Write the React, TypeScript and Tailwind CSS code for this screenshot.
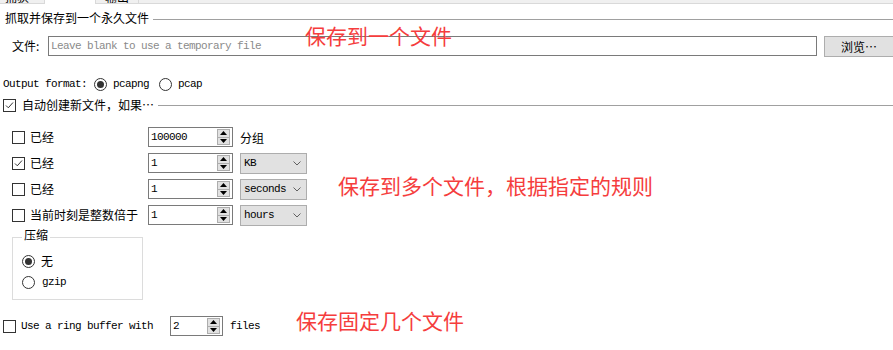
import React from 'react';

const mono = "font-['Liberation_Mono',monospace] text-[11px] tracking-[-0.6px] leading-none";
const cjk = "font-['Noto_Sans_CJK_SC',sans-serif] text-[12px] leading-none";
const note = "absolute font-['Noto_Sans_CJK_SC',sans-serif] text-[21px] leading-none text-[#f53d3d]";

function CheckBox({ checked = false }: { checked?: boolean }) {
  return (
    <div className="flex h-[13px] w-[13px] shrink-0 items-center justify-center border border-[#333333] bg-white">
      {checked && (
        <svg width="11" height="11" viewBox="0 0 11 11">
          <path d="M2 5.5L4.3 7.8L9 2.5" stroke="#333333" strokeWidth="1" fill="none" />
        </svg>
      )}
    </div>
  );
}

function Radio({ checked = false }: { checked?: boolean }) {
  return (
    <div className="flex h-[13px] w-[13px] shrink-0 items-center justify-center rounded-full border border-[#333333] bg-white">
      {checked && <div className="h-[7px] w-[7px] rounded-full bg-[#333333]" />}
    </div>
  );
}

function SpinBox({ value, w }: { value: string; w: string }) {
  return (
    <div className={`flex h-[20px] shrink-0 items-center border border-[#7a7a7a] bg-white ${w}`}>
      <span className={`flex-1 pl-[2px] text-black ${mono}`}>{value}</span>
      <div className="mr-[2px] flex h-[16px] w-[13px] flex-col border border-[#adadad] bg-[#e1e1e1]">
        <div className="flex flex-1 items-center justify-center border-b border-[#adadad]">
          <svg width="7" height="4" viewBox="0 0 7 4">
            <polygon points="0,4 3.5,0 7,4" fill="#000" />
          </svg>
        </div>
        <div className="flex flex-1 items-center justify-center">
          <svg width="7" height="4" viewBox="0 0 7 4">
            <polygon points="0,0 7,0 3.5,4" fill="#000" />
          </svg>
        </div>
      </div>
    </div>
  );
}

function Select({ value }: { value: string }) {
  return (
    <div className="flex h-[21px] w-[67px] shrink-0 items-center justify-between border border-[#adadad] bg-[#e1e1e1] pl-[3px] pr-[5px]">
      <span className={`text-black ${mono}`}>{value}</span>
      <svg width="8" height="5" viewBox="0 0 8 5">
        <path d="M0.5 0.5L4 4L7.5 0.5" stroke="#606060" strokeWidth="1" fill="none" />
      </svg>
    </div>
  );
}

function RuleRow({ checked, label, value, unit, select }: { checked?: boolean; label: string; value: string; unit?: string; select?: string }) {
  return (
    <div className="flex h-[26px] items-center pl-[12px]">
      <CheckBox checked={checked} />
      <span className={`ml-[5px] w-[118px] shrink-0 ${cjk}`}>{label}</span>
      <SpinBox value={value} w="w-[85px]" />
      <div className="ml-[7px]">
        {select ? <Select value={select} /> : <span className={cjk}>{unit}</span>}
      </div>
    </div>
  );
}

export default function App() {
  return (
    <div className="relative h-[350px] w-[893px] overflow-hidden bg-white text-black">
      {/* tab strip, mostly cut off */}
      <div className="flex h-[4px] overflow-hidden bg-[#f0f0f0]">
        <div className="w-[45px] shrink-0 overflow-hidden border-b border-r border-[#d9d9d9] pl-[5px]">
          <div className={`-mt-[9px] ${cjk}`}>捕获</div>
        </div>
        <div className="w-[50px] shrink-0 bg-white" />
        <div className="w-[44px] shrink-0 overflow-hidden border-x border-b border-[#d9d9d9] pl-[9px]">
          <div className={`-mt-[9px] ${cjk}`}>输出</div>
        </div>
        <div className="flex-1 border-b border-[#d9d9d9]" />
      </div>

      {/* permanent file group */}
      <div className="mt-[7px] flex h-[14px] items-center pl-[5px]">
        <span className={cjk}>抓取并保存到一个永久文件</span>
        <div className="ml-[4px] mt-[3px] h-px flex-1 bg-[#a0a0a0]" />
      </div>

      <div className="mt-[11px] flex items-start pl-[12px]">
        <span className={`w-[36px] shrink-0 pt-[4px] ${cjk}`}>文件:</span>
        <div className="flex h-[20px] w-[769px] shrink-0 items-center border border-[#7a7a7a] bg-white pl-[2px]">
          <span className={`text-[#8a8a8a] ${mono}`}>Leave blank to use a temporary file</span>
        </div>
        <div className="ml-[7px] flex h-[21px] w-[80px] shrink-0 items-center justify-center border border-[#adadad] bg-[#e1e1e1] pr-[10px]">
          <span className={cjk}>浏览…</span>
        </div>
      </div>

      <div className="mt-[20px] flex h-[14px] items-center pl-[3px]">
        <span className={mono}>Output format:</span>
        <div className="ml-[7px]"><Radio checked /></div>
        <span className={`ml-[6px] ${mono}`}>pcapng</span>
        <div className="ml-[10px]"><Radio /></div>
        <span className={`ml-[6px] ${mono}`}>pcap</span>
      </div>

      {/* multiple files group */}
      <div className="mt-[7px] flex h-[14px] items-center pl-[3px]">
        <CheckBox checked />
        <span className={`ml-[6px] ${cjk}`}>自动创建新文件，如果…</span>
        <div className="ml-[4px] h-px flex-1 bg-[#a0a0a0]" />
      </div>

      <div className="mt-[12px] flex flex-col">
        <RuleRow label="已经" value="100000" unit="分组" />
        <RuleRow checked label="已经" value="1" select="KB" />
        <RuleRow label="已经" value="1" select="seconds" />
        <RuleRow label="当前时刻是整数倍于" value="1" select="hours" />
      </div>

      <fieldset className="ml-[12px] mt-[1px] w-[131px] border border-[#dcdcdc] pb-[10px] pl-[9px]">
        <legend className={`h-[16px] px-[2px] leading-[16px] ${cjk}`}>压缩</legend>
        <div className="mt-[9px] flex h-[14px] items-center">
          <Radio checked />
          <span className={`ml-[6px] ${cjk}`}>无</span>
        </div>
        <div className="mt-[7px] flex h-[14px] items-center">
          <Radio />
          <span className={`ml-[7px] ${mono}`}>gzip</span>
        </div>
      </fieldset>

      <div className="mt-[16px] flex h-[20px] items-center pl-[3px]">
        <CheckBox />
        <span className={`ml-[5px] ${mono}`}>Use a ring buffer with</span>
        <div className="ml-[17px]">
          <SpinBox value="2" w="w-[53px]" />
        </div>
        <span className={`ml-[7px] ${mono}`}>files</span>
      </div>

      {/* red annotations drawn over the dialog */}
      <div className={`left-[305px] top-[25px] ${note}`}>保存到一个文件</div>
      <div className={`left-[338px] top-[175px] ${note}`}>保存到多个文件，根据指定的规则</div>
      <div className={`left-[296px] top-[310px] ${note}`}>保存固定几个文件</div>
    </div>
  );
}
